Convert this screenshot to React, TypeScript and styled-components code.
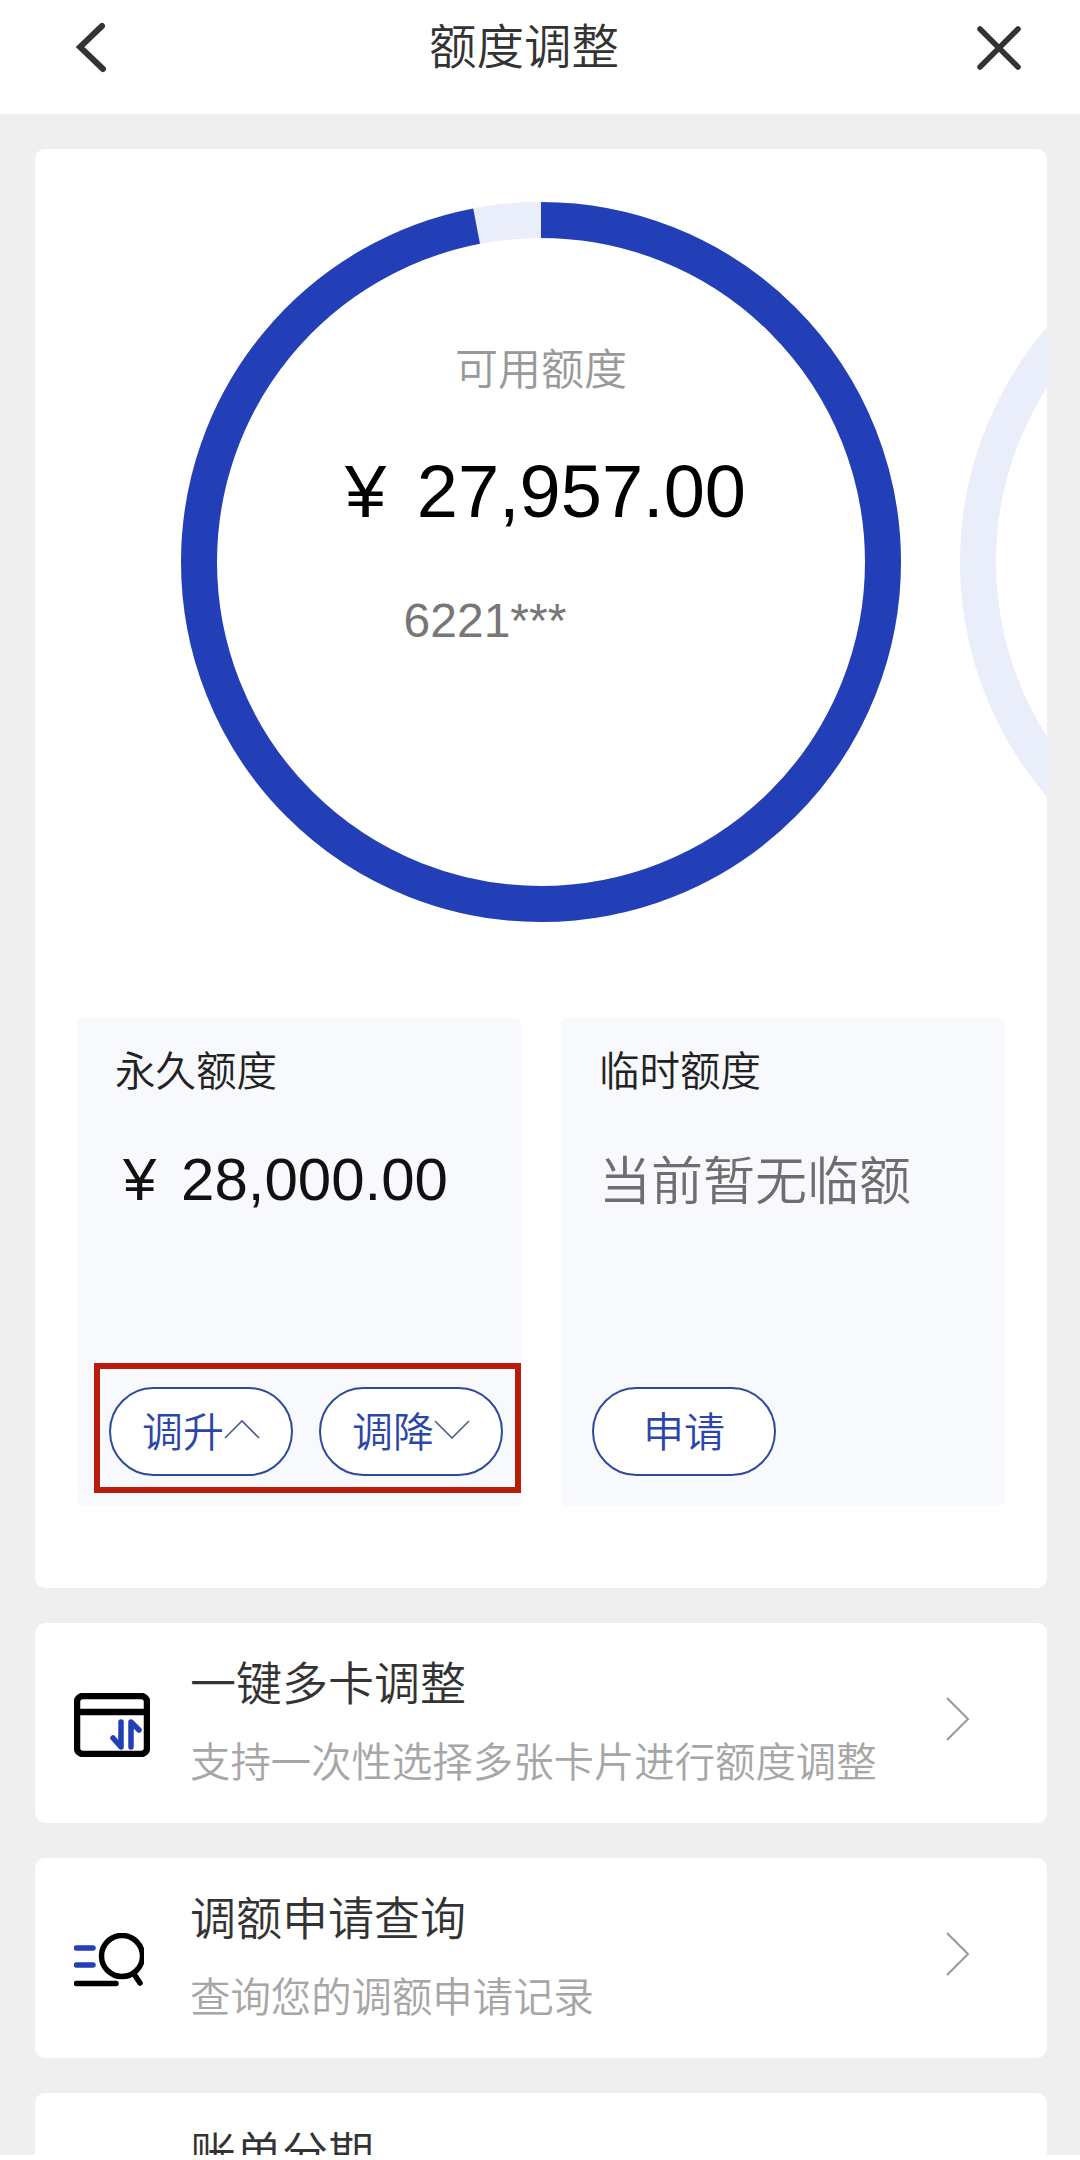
import React, { FC, ReactNode } from 'react';
import styled, { createGlobalStyle } from 'styled-components';

const cjk = '"Noto Sans CJK SC"';
const sans = `"Liberation Sans", ${cjk}, sans-serif`;
const blue = '#233fb7';
const ringSize = 720;
const ringStroke = 36;
const ringRadius = (ringSize - ringStroke) / 2;
const ringLength = 2 * Math.PI * ringRadius;

const GlobalStyle = createGlobalStyle`
  html, body {
    margin: 0;
    background: #fff;
    font-family: ${sans};
  }
`;

const Page = styled.div`
  width: 1080px;
  height: 2155px;
  overflow: hidden;
  background: #efefef;
`;

const Header = styled.header`
  display: flex;
  align-items: center;
  height: 114px;
  padding: 0 59px 18px 76px;
  box-sizing: border-box;
  background: #fff;
`;

const HeaderTitle = styled.h1`
  margin: 0 0 0 321px;
  font-size: 47.5px;
  font-weight: 350;
  line-height: 60px;
  color: #333;
`;

const CloseIcon = styled.svg`
  margin-left: auto;
`;

const Content = styled.main`
  display: flex;
  flex-direction: column;
  gap: 35px;
  padding: 35px 33px 0 35px;
`;

const MainCard = styled.section`
  height: 1439px;
  box-sizing: border-box;
  padding-top: 53px;
  background: #fff;
  border-radius: 10px;
`;

const Carousel = styled.div`
  display: flex;
  gap: 59px;
  padding-left: 146px;
  overflow: hidden;
`;

const RingBox = styled.div`
  position: relative;
  flex: none;
  display: flex;
  flex-direction: column;
  align-items: center;
  width: ${ringSize}px;
  height: ${ringSize}px;
  padding-top: 138px;
  box-sizing: border-box;
`;

const RingSvg = styled.svg`
  position: absolute;
  top: 0;
  left: 0;
`;

const RingLabel = styled.div`
  font-size: 43px;
  font-weight: 350;
  line-height: 60px;
  color: #999;
`;

const RingAmount = styled.div`
  margin-top: 52px;
  padding-left: 9px;
  font-size: 74px;
  line-height: 80px;
  color: #000;
`;

const Currency = styled.span<{ $gap: number }>`
  margin-right: ${p => p.$gap}px;
`;

const RingCardNo = styled.div`
  margin: 59px 112px 0 0;
  font-size: 48px;
  line-height: 60px;
  color: #777;
`;

const Quotas = styled.div`
  display: grid;
  grid-template-columns: 1fr 1fr;
  gap: 40px;
  margin: 96px 42px 0;
`;

const QuotaCard = styled.div`
  display: flex;
  flex-direction: column;
  height: 488px;
  background: #f8f9fd;
  border-radius: 6px;
`;

const QuotaTitle = styled.div`
  margin: 24px 0 0 38px;
  font-size: 40.5px;
  font-weight: 350;
  line-height: 60px;
  color: #222;
`;

const QuotaAmount = styled.div`
  margin: 43px 0 0 46px;
  font-size: 60px;
  line-height: 70px;
  color: #111;
`;

const QuotaEmpty = styled.div`
  margin: 45px 0 0 38px;
  font-size: 52px;
  font-weight: 350;
  line-height: 70px;
  color: #6e6e6e;
`;

const ButtonRow = styled.div`
  display: flex;
  gap: 26px;
  margin: auto 0 30px 31px;
`;

const MarkedRow = styled(ButtonRow)`
  width: 427px;
  box-sizing: border-box;
  margin: auto 0 13px 17px;
  padding: 18px 12px 11px 9px;
  border: 6px solid #b81c0a;
`;

const PillButton = styled.button`
  display: flex;
  align-items: center;
  justify-content: center;
  width: 184px;
  height: 89px;
  padding: 0 0 6px;
  background: #fff;
  border: 2px solid #2f4a9a;
  border-radius: 45px;
  font-family: ${sans};
  font-size: 41px;
  font-weight: 350;
  color: #2b46a8;
`;

const ListRow = styled.section`
  display: flex;
  align-items: center;
  flex: none;
  height: 200px;
  box-sizing: border-box;
  padding: 0 77px 0 39px;
  background: #fff;
  border-radius: 10px;
`;

const RowIcon = styled.div`
  flex: none;
  width: 116px;
  padding-top: 8px;
`;

const RowText = styled.div`
  align-self: flex-start;
  padding-top: 31px;
`;

const RowTitle = styled.div`
  font-size: 46px;
  font-weight: 350;
  line-height: 60px;
  color: #333;
`;

const RowSub = styled.div`
  margin-top: 24px;
  font-size: 40.4px;
  font-weight: 350;
  line-height: 50px;
  color: #a6a6a6;
`;

const RowChevron = styled.svg`
  margin: 0 0 8px auto;
`;

const Ring: FC<{ used?: number; children?: ReactNode }> = ({ used = 0, children }) => (
  <RingBox>
    <RingSvg width={ringSize} height={ringSize} viewBox="0 0 720 720">
      <circle cx="360" cy="360" r={ringRadius} fill="none" stroke="#eaedfa" strokeWidth={ringStroke} />
      {used > 0 && (
        <circle
          cx="360"
          cy="360"
          r={ringRadius}
          fill="none"
          stroke={blue}
          strokeWidth={ringStroke}
          strokeDasharray={`${ringLength * used} ${ringLength}`}
          transform="rotate(-90 360 360)"
        />
      )}
    </RingSvg>
    {children}
  </RingBox>
);

const ChevronUp = () => (
  <svg width="36" height="20" viewBox="0 0 36 20" fill="none" stroke="#4a5c94" strokeWidth="1.6">
    <path d="M1 19 L18 2 L35 19" />
  </svg>
);

const ChevronDown = () => (
  <svg width="36" height="20" viewBox="0 0 36 20" fill="none" stroke="#4a5c94" strokeWidth="1.6">
    <path d="M1 2 L18 19 L35 2" />
  </svg>
);

const CardAdjustIcon = () => (
  <svg width="76" height="64" viewBox="0 0 76 64" fill="none" strokeLinecap="round" strokeLinejoin="round">
    <path d="M47 29 V54 L39 45" stroke={blue} strokeWidth="5.5" />
    <path d="M57 54 V29 L65 37" stroke={blue} strokeWidth="5.5" />
    <rect x="3" y="3" width="70" height="58" rx="6" stroke="#000" strokeWidth="6.5" />
    <path d="M3 19 H73" stroke="#000" strokeWidth="6.5" />
  </svg>
);

const RecordSearchIcon = () => (
  <svg width="70" height="54" viewBox="0 0 70 54" fill="none" strokeLinecap="round">
    <path d="M2.5 15 H19 M2.5 32 H19" stroke={blue} strokeWidth="5.5" />
    <path d="M2.5 50.5 H42" stroke="#000" strokeWidth="5.5" />
    <circle cx="48" cy="23" r="20.5" stroke="#000" strokeWidth="5.5" />
    <path d="M60 41 L66 50" stroke="#000" strokeWidth="5.5" />
  </svg>
);

const rows = [
  { title: '一键多卡调整', sub: '支持一次性选择多张卡片进行额度调整', icon: <CardAdjustIcon /> },
  { title: '调额申请查询', sub: '查询您的调额申请记录', icon: <RecordSearchIcon /> },
  { title: '账单分期', sub: '', icon: null },
];

export default function App() {
  return (
    <Page>
      <GlobalStyle />
      <Header>
        <svg width="32" height="50" viewBox="0 0 32 50" fill="none" stroke="#333" strokeWidth="6" strokeLinecap="round">
          <path d="M26 3 L4 24 L27 46" />
        </svg>
        <HeaderTitle>额度调整</HeaderTitle>
        <CloseIcon width="44" height="44" viewBox="0 0 44 44" fill="none" stroke="#333" strokeWidth="5.5" strokeLinecap="round">
          <path d="M3 3 L41 41 M41 3 L3 41" />
        </CloseIcon>
      </Header>
      <Content>
        <MainCard>
          <Carousel>
            <Ring used={349 / 360}>
              <RingLabel>可用额度</RingLabel>
              <RingAmount>
                <Currency $gap={10}>¥</Currency> 27,957.00
              </RingAmount>
              <RingCardNo>6221***</RingCardNo>
            </Ring>
            <Ring />
          </Carousel>
          <Quotas>
            <QuotaCard>
              <QuotaTitle>永久额度</QuotaTitle>
              <QuotaAmount>
                <Currency $gap={8}>¥</Currency> 28,000.00
              </QuotaAmount>
              <MarkedRow>
                <PillButton>调升<ChevronUp /></PillButton>
                <PillButton>调降<ChevronDown /></PillButton>
              </MarkedRow>
            </QuotaCard>
            <QuotaCard>
              <QuotaTitle>临时额度</QuotaTitle>
              <QuotaEmpty>当前暂无临额</QuotaEmpty>
              <ButtonRow>
                <PillButton>申请</PillButton>
              </ButtonRow>
            </QuotaCard>
          </Quotas>
        </MainCard>
        {rows.map(({ title, sub, icon }) => (
          <ListRow key={title}>
            <RowIcon>{icon}</RowIcon>
            <RowText>
              <RowTitle>{title}</RowTitle>
              {sub && <RowSub>{sub}</RowSub>}
            </RowText>
            <RowChevron width="24" height="44" viewBox="0 0 24 44" fill="none" stroke="#999" strokeWidth="2">
              <path d="M1 1 L22 22 L1 43" />
            </RowChevron>
          </ListRow>
        ))}
      </Content>
    </Page>
  );
}
